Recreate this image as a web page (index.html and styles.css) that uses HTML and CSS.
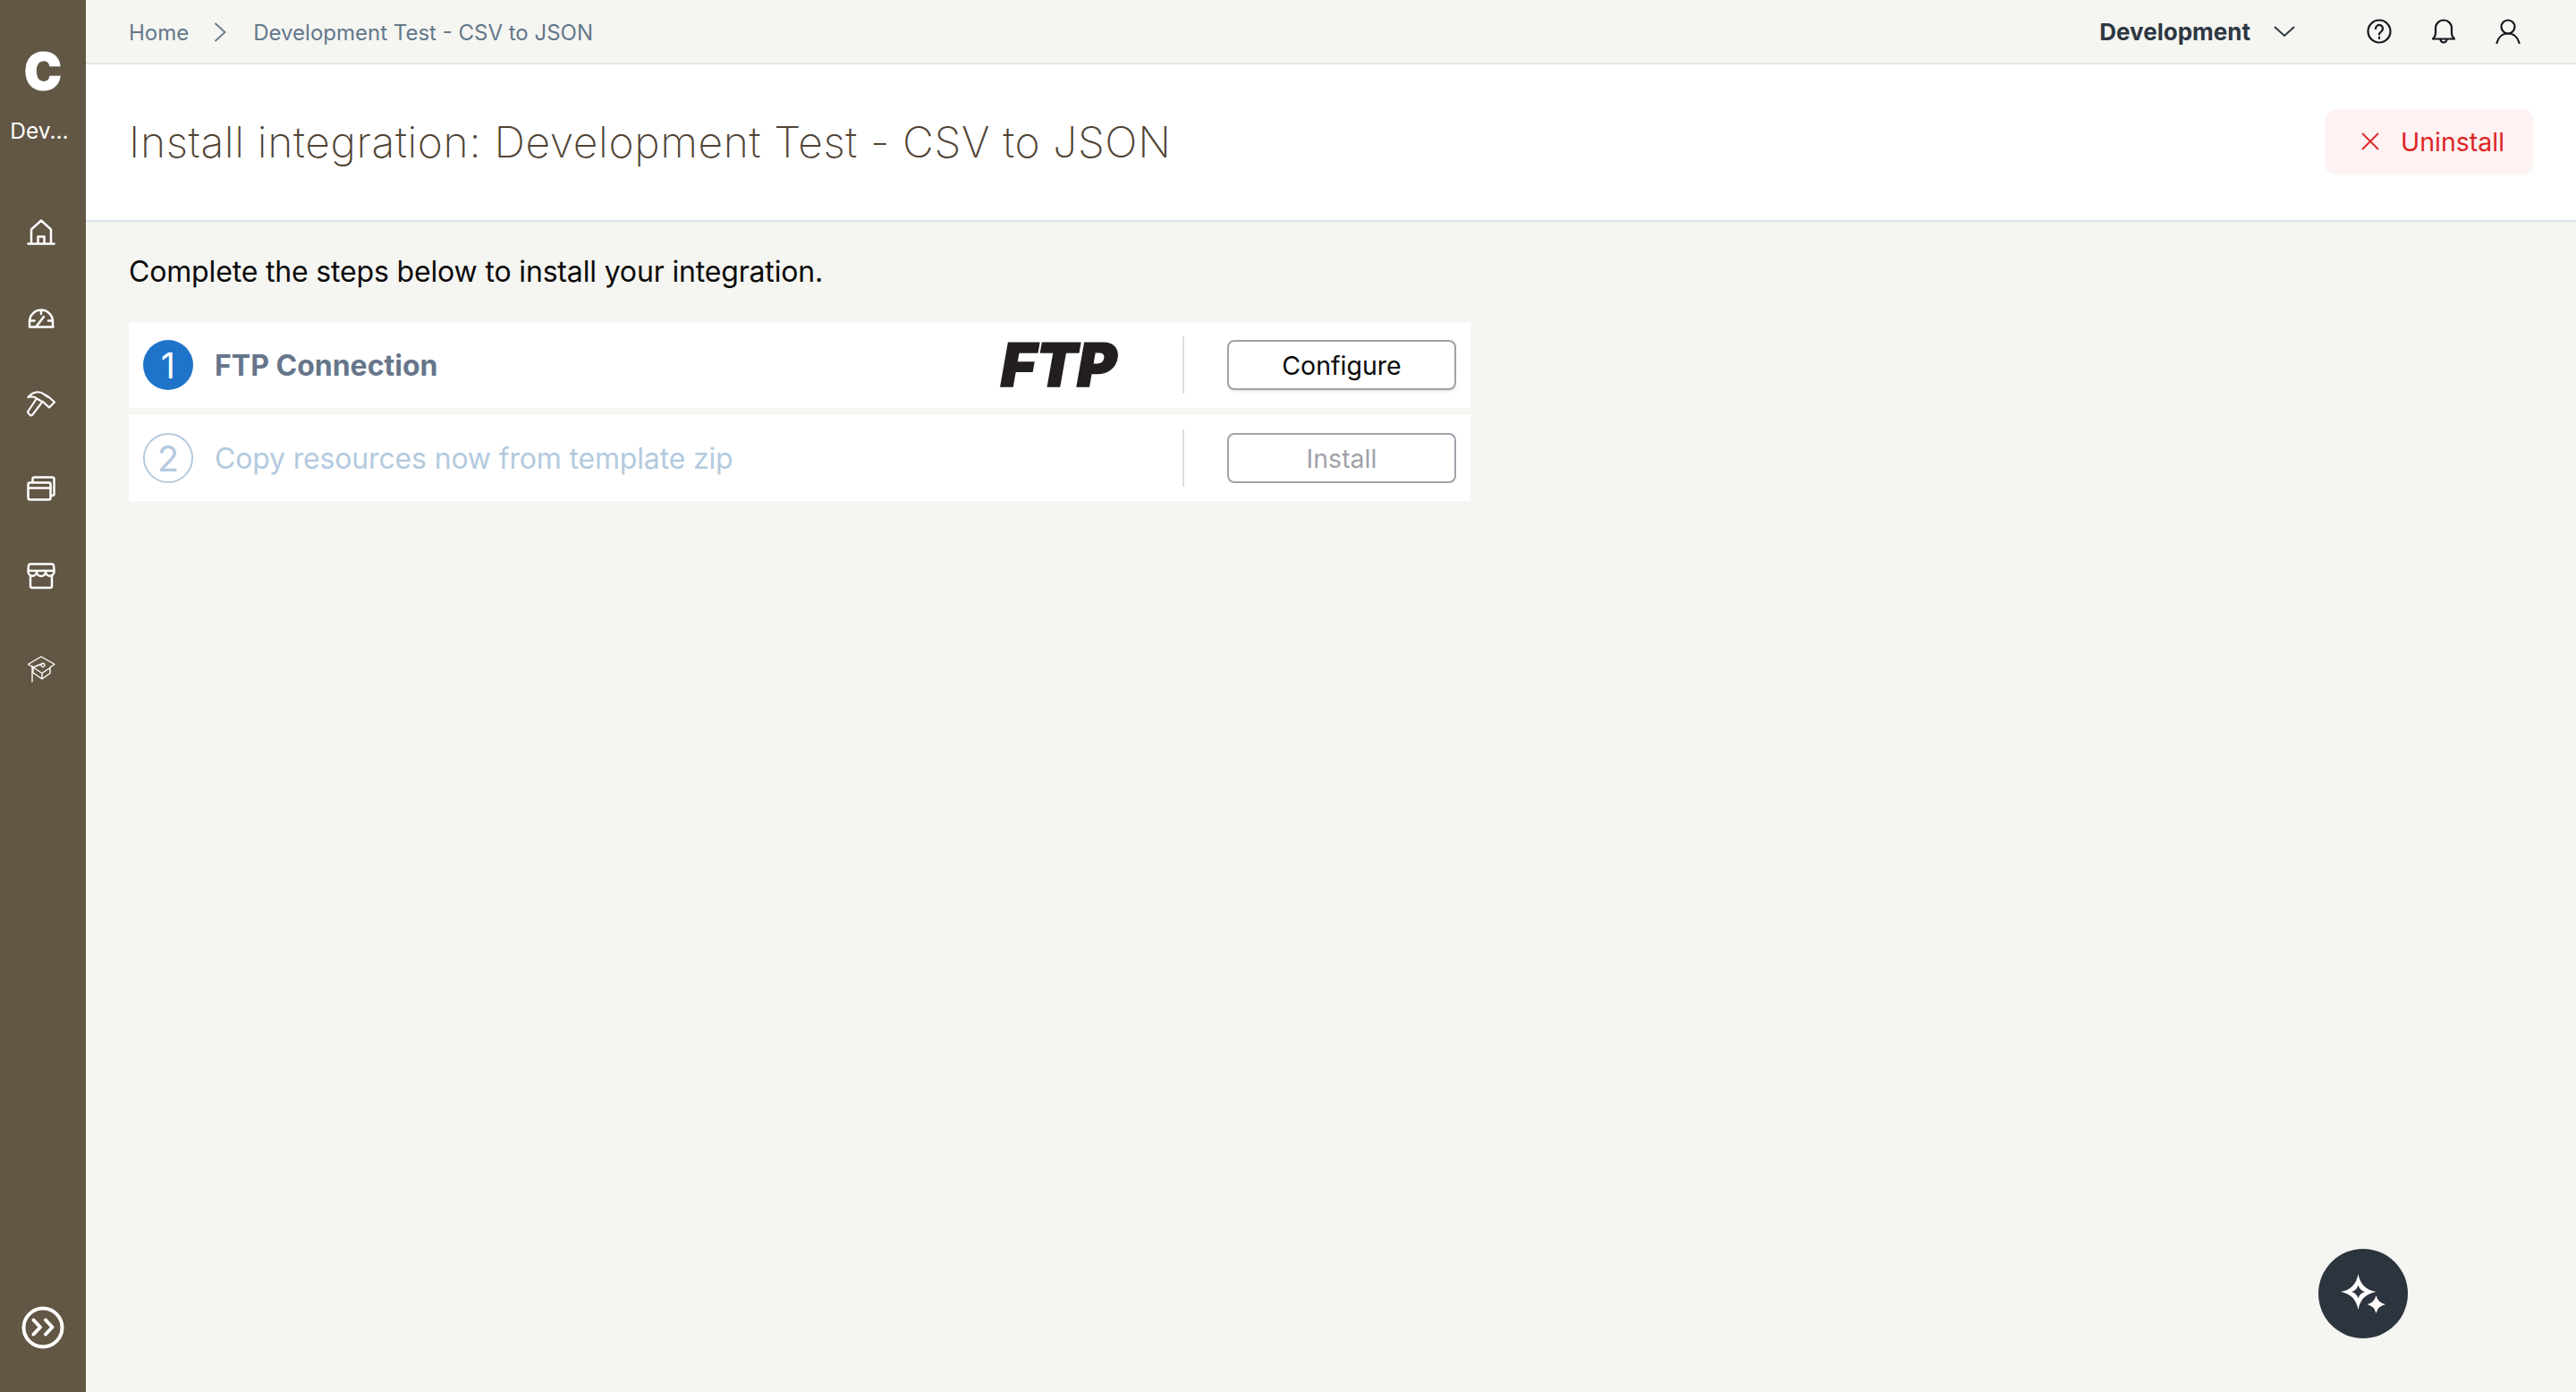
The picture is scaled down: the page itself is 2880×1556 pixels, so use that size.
FILE: index.html
```html
<!DOCTYPE html>
<html lang="en">
<head>
<meta charset="utf-8">
<title>Install integration</title>
<link rel="stylesheet" href="styles.css">
</head>
<body>
<div class="app">
  <aside class="sidebar">
    <div class="logo">C</div>
    <div class="org">Dev...</div>
    <nav class="nav">
      <div class="nav-item"><svg class="nav-icon" viewBox="0 0 32 32"><path d="M5 28V12.500L16 2.500l11 10V28M1.500 28.500h29M12.500 28V20.500h7V28"/></svg></div>
      <div class="nav-item"><svg class="nav-icon" viewBox="0 0 32 32"><path d="M3 25.500h26.500M3 25.500v-6a13 13 0 0 1 26 0v6M16 7v4M3.500 18.500h5M24 18.500h5M10.500 25l8.500-11"/></svg></div>
      <div class="nav-item"><svg class="nav-icon nav-icon-mid" viewBox="0 0 32 32"><path d="M1.500 8C6 2 14 .5 19 4.500l4 3M23 6.500l8 7-6 6-7-6.500M11 9.500 1.500 23.500a2 2 0 0 0 .3 2.500l2 2a2 2 0 0 0 2.500-.3L16 15M1.500 8c3.500-1 7.500-.5 10.500 2l6 3.500"/></svg></div>
      <div class="nav-item"><svg class="nav-icon" viewBox="0 0 32 32"><rect x="1.500" y="7.500" width="25" height="19" rx="2"/><path d="M1.500 13.500h25M6.500 7V3.500a2 2 0 0 1 2-2h20a2 2 0 0 1 2 2V20a2 2 0 0 1-2 2H27"/></svg></div>
      <div class="nav-item"><svg class="nav-icon" viewBox="0 0 32 32"><path d="M4 15v12a2 2 0 0 0 2 2h20a2 2 0 0 0 2-2V15M4 2.500h24a2 2 0 0 1 2 1.500l.5 6v1a4.750 4.750 0 0 1-9.500 0 5 5 0 0 1-10 0 4.750 4.750 0 0 1-9.500 0v-1l.5-6a2 2 0 0 1 2-1.500zM1.500 10h29"/></svg></div>
      <div class="nav-item nav-item-last"><svg class="nav-icon nav-icon-thin" viewBox="0 0 32 32"><path d="M16 2L1.500 10.500 7 14v6l10 7 9-6.500V14l5-3.500zM7 14l10 6.500 9-6M17 20.500V27M7 14l11-4.500M6 12.500V30M18 9.500a2 2 0 1 0 .1 0"/></svg></div>
    </nav>
    <svg class="expand" viewBox="0 0 48 48"><circle cx="24" cy="24" r="21.500"/><path d="M13.500 15.500 21 23.500 13.500 31.500M27 15.500 34.500 23.500 27 31.500"/></svg>
  </aside>
  <main class="main">
    <header class="topbar">
      <div class="crumbs">
        <span>Home</span>
        <svg class="crumb-sep" viewBox="0 0 14 24"><path d="M1.500 2l11 10-11 10"/></svg>
        <span>Development Test - CSV to JSON</span>
      </div>
      <div class="top-right">
        <span class="env">Development</span>
        <svg class="env-chev" viewBox="0 0 24 14"><path d="M1 2l11 10L23 2"/></svg>
        <div class="top-icons">
          <svg class="top-icon" viewBox="0 0 28 28"><circle cx="14" cy="14" r="12.500"/><path d="M10 11a4 4 0 1 1 6.500 3c-1.500 1.200-2.500 2-2.500 3.500M14 20.500v1.500"/></svg>
          <svg class="top-icon" viewBox="0 0 28 28"><path d="M2 22.500c2-2 3-3 3-6V10.500a9 9 0 0 1 18 0v6c0 3 1 4 3 6zM10.500 23a3.500 3.500 0 0 0 7 0"/></svg>
          <svg class="top-icon" viewBox="0 0 28 28"><circle cx="14" cy="9" r="7.500"/><path d="M1.500 27c1.500-6 6-10.500 12.500-10.500S25 21 26.500 27"/></svg>
        </div>
      </div>
    </header>
    <section class="page-head">
      <h1 class="title">Install integration: Development Test - CSV to JSON</h1>
      <button class="uninstall">
        <svg class="x-icon" viewBox="0 0 20 20"><path d="M1 1l18 18M19 1L1 19"/></svg>
        <span>Uninstall</span>
      </button>
    </section>
    <section class="content">
      <p class="intro">Complete the steps below to install your integration.</p>
      <div class="steps">
        <div class="step">
          <div class="num num-on">1</div>
          <div class="step-name step-name-on">FTP Connection</div>
          <div class="ftp">FTP</div>
          <div class="divider"></div>
          <button class="btn">Configure</button>
        </div>
        <div class="step">
          <div class="num num-off">2</div>
          <div class="step-name step-name-off">Copy resources now from template zip</div>
          <div class="divider"></div>
          <button class="btn btn-off">Install</button>
        </div>
      </div>
    </section>
    <button class="fab">
      <svg class="fab-icon" viewBox="0 0 50 44"><path fill-rule="evenodd" d="M19.500 0Q22.500 17 39.500 20 22.500 23 19.500 40 16.500 23 0 20 16.500 17 19.500 0zM19.500 12.500Q18 18.500 12 20 18 21.500 19.500 27.500 21 21.500 27 20 21 18.500 19.500 12.500z"/><path d="M39.500 24Q41.500 32 50 34 41.500 36 39.500 44 37.500 36 29.500 34 37.500 32 39.500 24z"/></svg>
    </button>
  </main>
</div>
</body>
</html>
```
FILE: styles.css
```css
* { box-sizing: border-box; }
html, body { margin: 0; height: 100%; }
body { font-family: Inter, "Liberation Sans", sans-serif; background: #f5f5f1; }
.app { display: flex; height: 1556px; overflow: hidden; }

.sidebar { width: 96px; flex: none; background: #625644; color: #fff; display: flex; flex-direction: column; align-items: center; position: relative; }
.logo { font-size: 56px; font-weight: 900; line-height: 68px; margin-top: 46px; -webkit-text-stroke: 1px #fff; }
.org { font-size: 24.500px; line-height: 32px; margin-top: 16px; margin-left: -8px; }
.nav { display: flex; flex-direction: column; margin-top: 50px; margin-left: -4px; }
.nav-item { height: 96px; display: flex; align-items: center; justify-content: center; }
.nav-item-last { margin-top: 8px; }
.nav-icon { width: 32px; height: 32px; fill: none; stroke: #fff; stroke-width: 2.500; stroke-linejoin: round; stroke-linecap: round; }
.nav-icon-mid { stroke-width: 2.200; }
.nav-icon-thin { stroke-width: 1.400; }
.expand { width: 48px; height: 48px; margin-top: auto; margin-bottom: 48px; fill: none; stroke: #fff; stroke-width: 4; stroke-linecap: round; stroke-linejoin: round; }

.main { flex: 1; display: flex; flex-direction: column; position: relative; min-width: 0; }
.topbar { height: 72px; border-bottom: 2px solid #e4e4e4; display: flex; align-items: center; justify-content: space-between; padding: 2px 48px 0 48px; }
.crumbs { display: flex; align-items: center; font-size: 24px; color: #64788c; }
.crumb-sep { width: 14px; height: 24px; margin: 0 30px 0 28px; fill: none; stroke: #64788c; stroke-width: 1.800; }
.top-right { display: flex; align-items: center; margin-top: -2px; }
.env { font-size: 26px; font-weight: 700; color: #2d3741; }
.env-chev { width: 24px; height: 14px; margin-left: 26px; fill: none; stroke: #2d3741; stroke-width: 2; }
.top-icons { display: flex; gap: 44px; margin-left: 80px; margin-right: 14px; }
.top-icon { width: 28px; height: 28px; fill: none; stroke: #14181c; stroke-width: 2.200; stroke-linecap: round; stroke-linejoin: round; }

.page-head { height: 176px; background: #fff; border-bottom: 2px solid #dbe5ee; display: flex; align-items: center; justify-content: space-between; padding: 0 48px 2px; }
.title { margin: 0; font-size: 48px; font-weight: 250; color: #4f4335; letter-spacing: .62px; }
.uninstall { width: 232px; height: 72px; border: none; border-radius: 12px; background: #fef2f2; box-shadow: 0 1px 3px rgba(0,0,0,.06); color: #dc2626; font: 400 28.500px Inter, sans-serif; display: flex; align-items: center; gap: 24px; padding: 0 0 0 40px; }
.x-icon { width: 20px; height: 20px; fill: none; stroke: #dc2626; stroke-width: 1.800; }

.content { padding: 36px 0 0 48px; }
.intro { margin: 0; font-size: 32px; line-height: 40px; letter-spacing: -.16px; color: #0a0a0a; }
.steps { width: 1500px; margin-top: 36px; display: flex; flex-direction: column; gap: 8px; }
.step { height: 96px; background: #fff; display: flex; align-items: center; padding: 0 16px; }
.num { width: 56px; height: 56px; border-radius: 50%; display: flex; align-items: center; justify-content: center; font-size: 40px; font-weight: 400; flex: none; }
.num-on { background: #1d74c9; color: #fff; }
.num-off { border: 2px solid #b4cade; color: #b4cade; }
.step-name { font-size: 32px; margin-left: 24px; }
.step-name-on { font-weight: 700; color: #66768a; }
.step-name-off { color: #b4cade; letter-spacing: -.16px; }
.ftp { margin-left: auto; margin-right: 73px; font-size: 67px; font-weight: 900; line-height: 68px; color: #231f20; transform: skewX(-10deg); -webkit-text-stroke: 1.500px #231f20; }
.divider { width: 2px; height: 64px; background: #dedede; margin-left: auto; flex: none; }
.ftp + .divider { margin-left: 0; }
.btn { width: 256px; height: 56px; margin-left: 48px; border: 2px solid #a1a1aa; border-radius: 8px; background: #fff; box-shadow: 0 2px 3px rgba(0,0,0,.08); color: #0a0a0a; font: 400 28.500px Inter, sans-serif; flex: none; }
.btn-off { color: #a1a1aa; box-shadow: none; }

.fab { position: absolute; left: 2496px; top: 1396px; width: 100px; height: 100px; border: none; border-radius: 50%; background: #2c343d; display: flex; align-items: center; justify-content: center; padding: 0; }
.fab-icon { width: 50px; height: 44px; fill: #fff; }
```
